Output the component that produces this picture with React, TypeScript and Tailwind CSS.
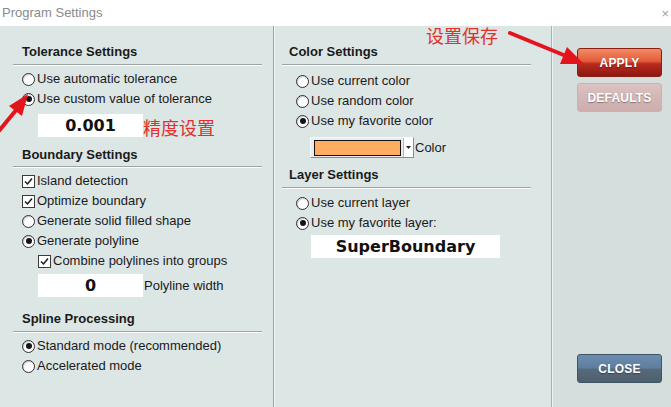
import React from 'react'

const FONT = { fontFamily: '"Liberation Sans", Arial, sans-serif' }
const CJK = { fontFamily: '"Noto Sans CJK SC", "Noto Sans", sans-serif' }
const WIDE = { fontFamily: '"DejaVu Sans", Verdana, sans-serif' }

function Radio({ checked = false }: { checked?: boolean }) {
  return (
    <span className="flex h-[13px] w-[13px] shrink-0 items-center justify-center rounded-full border border-[#2e2e2e] bg-white shadow-[inset_1px_1px_1px_rgba(0,0,0,0.2)]">
      {checked && <span className="h-[6px] w-[6px] rounded-full bg-[#151515]" />}
    </span>
  )
}

function Check() {
  return (
    <span className="flex h-[13px] w-[13px] shrink-0 items-center justify-center border border-[#3a3a3a] bg-white">
      <svg viewBox="0 0 11 11" className="h-[11px] w-[11px]" fill="none" stroke="#1a1a1a" strokeWidth={1.5}>
        <path d="M2 5.5l2.5 2.5L9 2.5" />
      </svg>
    </span>
  )
}

function Option({ kind, checked, label, className = '' }: { kind: 'radio' | 'check'; checked?: boolean; label: string; className?: string }) {
  return (
    <div className={`flex h-[20px] items-center gap-[2px] text-[13px] text-[#1a1a1a] ${className}`}>
      {kind === 'radio' ? <Radio checked={checked} /> : <Check />}
      <span>{label}</span>
    </div>
  )
}

function Header({ title, className = '' }: { title: string; className?: string }) {
  return <div className={`h-[20px] text-[13px] font-bold leading-[20px] text-[#1a1a1a] ${className}`}>{title}</div>
}

function Rule({ className = '' }: { className?: string }) {
  return <div className={`h-px w-[249px] bg-[#9ea4a4] shadow-[0_1px_0_#ffffff] ${className}`} />
}

function ValueBox({ value, className = '' }: { value: string; className?: string }) {
  return (
    <div className={`flex h-[23px] items-center justify-center bg-white text-[16px] font-bold text-[#111] ${className}`} style={WIDE}>
      {value}
    </div>
  )
}

function Btn({ label, tone }: { label: string; tone: 'apply' | 'defaults' | 'close' }) {
  const styles = {
    apply:
      'border-[#8a2012] bg-[linear-gradient(180deg,#f48a64_0%,#e25c3a_45%,#b82c1c_55%,#8e1614_100%)]',
    defaults: 'border-[#cdb0b0] bg-[linear-gradient(180deg,#dcc3c3_0%,#d3b6b6_50%,#cfadad_100%)]',
    close:
      'border-[#3f5566] bg-[linear-gradient(180deg,#6c8db0_0%,#5d7e9e_48%,#566a7c_52%,#4e5f6c_100%)]',
  }[tone]
  return (
    <div
      className={`flex h-[29px] w-[85px] items-center justify-center rounded-[3px] border text-[12px] font-bold tracking-[0.2px] text-white [text-shadow:0_1px_1px_rgba(0,0,0,0.35)] ${styles}`}
    >
      {label}
    </div>
  )
}

export default function App() {
  return (
    <div className="relative h-[407px] w-[671px] overflow-hidden bg-[#dce6e5]" style={FONT}>
      {/* Title bar */}
      <div className="flex h-[26px] items-center justify-between bg-white pl-[2px] pr-[2px]">
        <span className="text-[13px] text-[#8a8a8a]">Program Settings</span>
        <span className="text-[13px] leading-none text-[#a0a0a0]">×</span>
      </div>

      <div className="flex h-[381px]">
        {/* Left column */}
        <div className="flex w-[273px] flex-col pt-[16px]">
          <Header title="Tolerance Settings" className="pl-[22px]" />
          <Rule className="ml-[13px] mt-[2px]" />
          <div className="mt-[4px] pl-[22px]">
            <Option kind="radio" label="Use automatic tolerance" />
            <Option kind="radio" checked label="Use custom value of tolerance" />
          </div>
          <div className="mt-[5px] flex items-center">
            <ValueBox value="0.001" className="ml-[38px] w-[105px]" />
            <span className="pt-[2px] text-[18px] leading-none text-[#e0302c]" style={CJK}>精度设置</span>
          </div>
          <Header title="Boundary Settings" className="mt-[8px] pl-[22px]" />
          <Rule className="ml-[13px] mt-[1px]" />
          <div className="mt-[4px] pl-[22px]">
            <Option kind="check" label="Island detection" />
            <Option kind="check" label="Optimize boundary" />
            <Option kind="radio" label="Generate solid filled shape" />
            <Option kind="radio" checked label="Generate polyline" />
            <Option kind="check" label="Combine polylines into groups" className="pl-[16px]" />
          </div>
          <div className="mt-[3px] flex items-center">
            <ValueBox value="0" className="ml-[38px] w-[105px]" />
            <span className="pl-[1px] text-[13px] text-[#1a1a1a]">Polyline width</span>
          </div>
          <Header title="Spline Processing" className="mt-[12px] pl-[22px]" />
          <Rule className="ml-[13px] mt-[2px]" />
          <div className="mt-[4px] pl-[22px]">
            <Option kind="radio" checked label="Standard mode (recommended)" />
            <Option kind="radio" label="Accelerated mode" />
          </div>
        </div>

        <div className="w-px bg-[#9aa2a2]" />
        <div className="w-px bg-[#f4f8f8]" />

        {/* Middle column */}
        <div className="flex w-[276px] flex-col pt-[16px]">
          <Header title="Color Settings" className="pl-[14px]" />
          <Rule className="ml-[7px] mt-[2px]" />
          <div className="mt-[6px] pl-[21px]">
            <Option kind="radio" label="Use current color" />
            <Option kind="radio" label="Use random color" />
            <Option kind="radio" checked label="Use my favorite color" />
          </div>
          <div className="ml-[35px] mt-[6px] flex items-center">
            <div className="flex h-[21px] w-[104px] items-center border border-[#8c8c8c] border-t-[#f8f8f8] border-l-[#f8f8f8] bg-[#ececec] pl-[3px]">
              <div className="h-[16px] w-[87px] border border-[#111] bg-[#ffad60]" />
              <div className="ml-[2px] flex h-[19px] flex-1 items-center justify-center border-l border-[#b8b8b8] bg-white">
                <svg viewBox="0 0 5 3" className="h-[3px] w-[5px]">
                  <path d="M0 0h5L2.5 3z" fill="#222" />
                </svg>
              </div>
            </div>
            <span className="pl-[1px] text-[13px] text-[#1a1a1a]">Color</span>
          </div>
          <Header title="Layer Settings" className="mt-[7px] pl-[14px]" />
          <Rule className="ml-[7px] mt-[2px]" />
          <div className="mt-[5px] pl-[21px]">
            <Option kind="radio" label="Use current layer" />
            <Option kind="radio" checked label="Use my favorite layer:" />
          </div>
          <ValueBox value="SuperBoundary" className="ml-[36px] mt-[2px] w-[189px]" />
        </div>

        <div className="w-px bg-[#a8b0b0]" />
        <div className="w-px bg-[#eef3f3]" />

        {/* Right column */}
        <div className="flex flex-1 flex-col bg-[#d5dedd] pb-[24px] pl-[24px] pt-[22px]">
          <Btn label="APPLY" tone="apply" />
          <div className="mt-[6px]">
            <Btn label="DEFAULTS" tone="defaults" />
          </div>
          <div className="mt-auto">
            <Btn label="CLOSE" tone="close" />
          </div>
        </div>
      </div>

      {/* Annotation overlay */}
      <span className="absolute left-[426px] top-[26px] text-[18px] leading-none text-[#e0302c]" style={CJK}>
        设置保存
      </span>
      <svg className="pointer-events-none absolute inset-0" width={671} height={407}>
        <line x1={510} y1={33} x2={566} y2={56} stroke="#e3141b" strokeWidth={4} strokeLinecap="round" />
        <polygon points="584,64 560,64 567,47" fill="#e3141b" />
        <line x1={-2} y1={132} x2={17} y2={109} stroke="#e3141b" strokeWidth={4} strokeLinecap="round" />
        <polygon points="28,94 22,116 9,106" fill="#e3141b" />
      </svg>
    </div>
  )
}
